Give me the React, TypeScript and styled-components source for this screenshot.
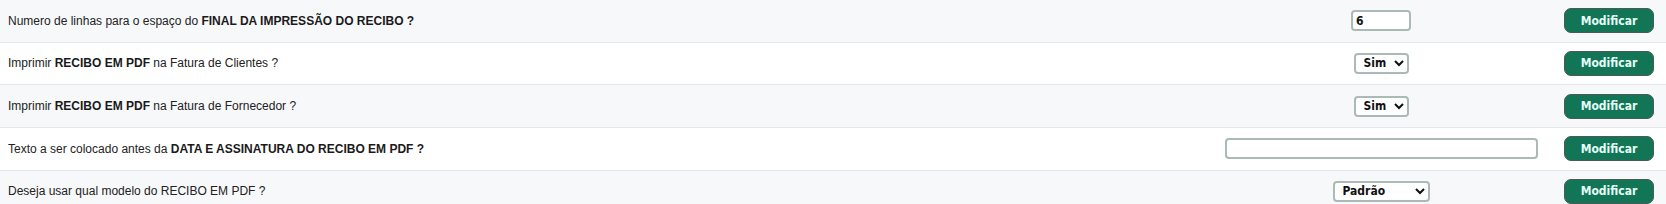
import React from "react";
import styled, { createGlobalStyle } from "styled-components";

const GlobalStyle = createGlobalStyle`
  html, body {
    margin: 0;
    padding: 0;
    background: #ffffff;
  }
  body {
    font-family: "Liberation Sans", Arial, sans-serif;
  }
`;

const Table = styled.div`
  display: flex;
  flex-direction: column;
  width: 100%;
`;

const Row = styled.div<{ $striped: boolean }>`
  display: grid;
  grid-template-columns: 1fr 330px 90px;
  column-gap: 18px;
  align-items: center;
  height: 41.67px;
  padding: 0 12px 0 8px;
  background: ${(p) => (p.$striped ? "#f7f8fa" : "#ffffff")};
  border-bottom: 1px solid #e3e7eb;
`;

const Label = styled.div`
  font-size: 12px;
  color: #222;
  white-space: nowrap;

  b {
    font-weight: bold;
    color: #1a1a1a;
  }
`;

const Control = styled.div`
  display: flex;
  justify-content: center;
  align-items: center;
`;

const formFont = `
  font-family: "DejaVu Sans Condensed", "DejaVu Sans", sans-serif;
  font-size: 12px;
  font-weight: bold;
  color: #111;
`;

const TextInput = styled.input<{ $width: number }>`
  ${formFont}
  box-sizing: border-box;
  width: ${(p) => p.$width}px;
  height: 21px;
  padding: 0 3px;
  border: 2px solid #abbab7;
  border-radius: 4px;
  background: #fff;
  outline: none;
`;

const Select = styled.select<{ $width: number }>`
  ${formFont}
  box-sizing: border-box;
  width: ${(p) => p.$width}px;
  height: 21px;
  padding: 0 2px 0 4px;
  border: 2px solid #abbab7;
  border-radius: 4px;
  background: #fff;
  outline: none;
`;

const Button = styled.button`
  font-family: "DejaVu Sans Condensed", "DejaVu Sans", sans-serif;
  font-size: 12px;
  font-weight: bold;
  color: #e6fff7;
  background: #117556;
  border: 1px solid #4b5a55;
  border-radius: 7px;
  width: 90px;
  height: 25px;
  padding: 0;
  cursor: pointer;
`;

type Field =
  | { kind: "text"; value: string; width: number }
  | { kind: "select"; value: string; options: string[]; width: number };

interface Setting {
  id: number;
  label: React.ReactNode;
  field: Field;
}

const settings: Setting[] = [
  {
    id: 1,
    label: (
      <>
        Numero de linhas para o espaço do <b>FINAL DA IMPRESSÃO DO RECIBO ?</b>
      </>
    ),
    field: { kind: "text", value: "6", width: 60 },
  },
  {
    id: 2,
    label: (
      <>
        Imprimir <b>RECIBO EM PDF</b> na Fatura de Clientes ?
      </>
    ),
    field: { kind: "select", value: "Sim", options: ["Sim", "Não"], width: 55 },
  },
  {
    id: 3,
    label: (
      <>
        Imprimir <b>RECIBO EM PDF</b> na Fatura de Fornecedor ?
      </>
    ),
    field: { kind: "select", value: "Sim", options: ["Sim", "Não"], width: 55 },
  },
  {
    id: 4,
    label: (
      <>
        Texto a ser colocado antes da <b>DATA E ASSINATURA DO RECIBO EM PDF ?</b>
      </>
    ),
    field: { kind: "text", value: "", width: 313 },
  },
  {
    id: 5,
    label: <>Deseja usar qual modelo do RECIBO EM PDF ?</>,
    field: { kind: "select", value: "Padrão", options: ["Padrão", "Modelo 2"], width: 97 },
  },
];

const SettingRow = ({ setting, index }: { setting: Setting; index: number }) => {
  const { field } = setting;
  return (
    <Row $striped={index % 2 === 0}>
      <Label>{setting.label}</Label>
      <Control>
        {field.kind === "text" ? (
          <TextInput $width={field.width} defaultValue={field.value} />
        ) : (
          <Select $width={field.width} defaultValue={field.value}>
            {field.options.map((o) => (
              <option key={o}>{o}</option>
            ))}
          </Select>
        )}
      </Control>
      <Button>Modificar</Button>
    </Row>
  );
};

const App = () => (
  <>
    <GlobalStyle />
    <Table>
      {settings.map((s, i) => (
        <SettingRow key={s.id} setting={s} index={i} />
      ))}
    </Table>
  </>
);

export default App;
